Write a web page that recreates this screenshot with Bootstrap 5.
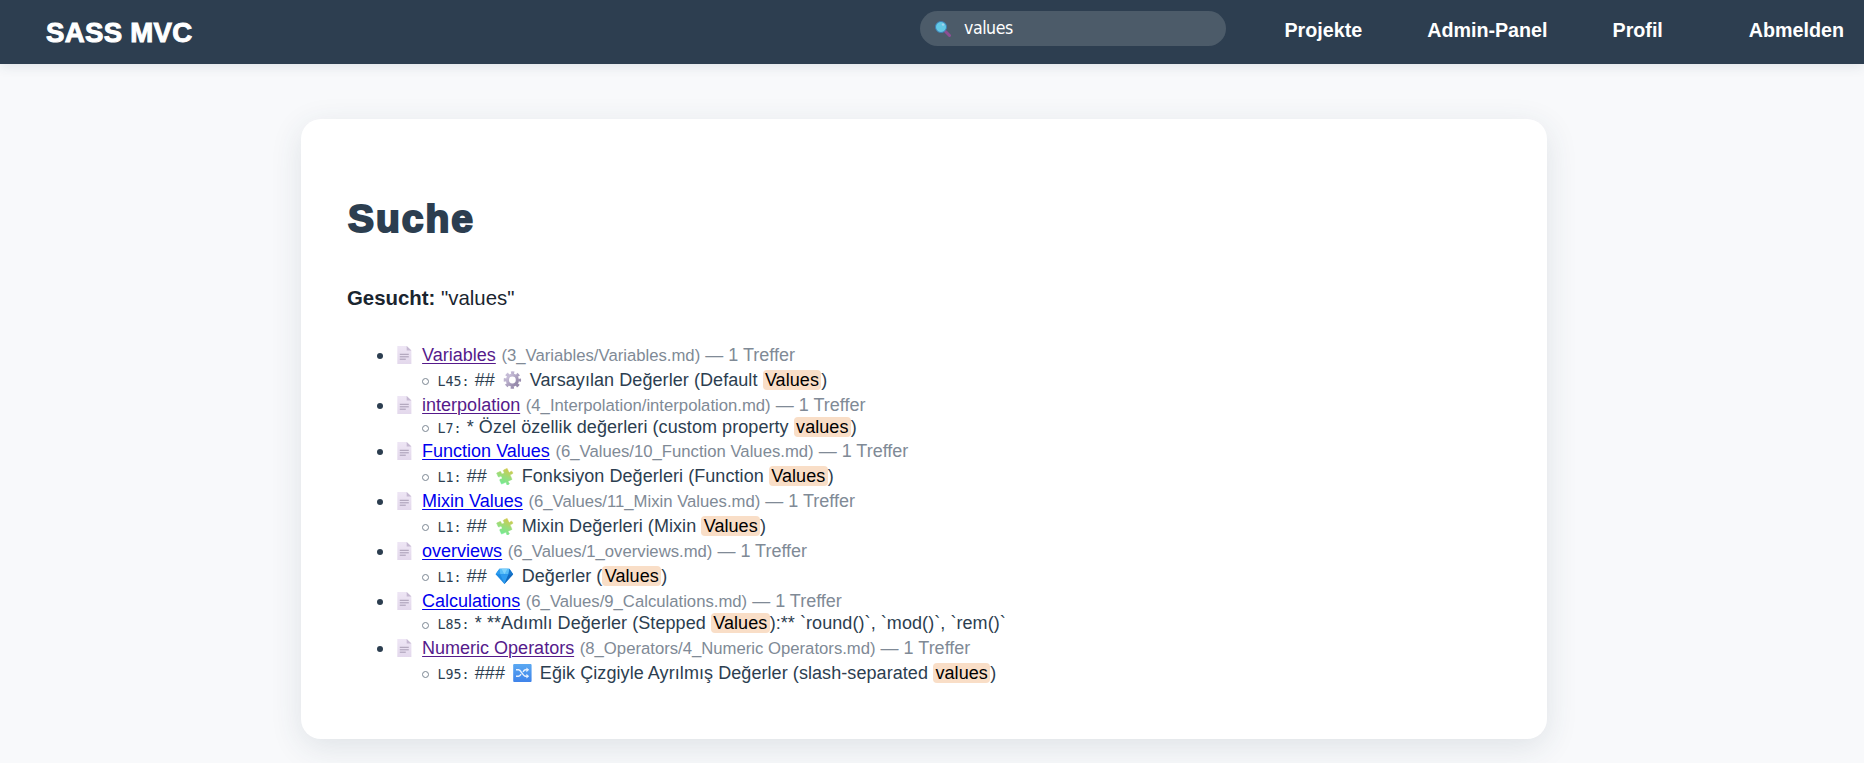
<!DOCTYPE html>
<html lang="de">
<head>
<meta charset="utf-8">
<meta name="viewport" content="width=device-width, initial-scale=1">
<title>SASS MVC – Suche</title>
<link href="https://cdn.jsdelivr.net/npm/bootstrap@5.3.0/dist/css/bootstrap.min.css" rel="stylesheet">
<style>
  body { background: #f8f9fb; color: #2c3e50; font-family: "Liberation Sans", Arial, sans-serif; font-size: 18px; min-height: 763px; }
  .topbar { height: 64px; background: #2d3e50; box-shadow: 0 2px 12px rgba(44, 62, 80, .12); padding: 0 20px 0 46px; }
  .topbar .navbar-brand { font-size: 27.6px; font-weight: 800; color: #fff; -webkit-text-stroke: 1px #fff; line-height: 65px; letter-spacing: .3px; }
  .searchbox { width: 306px; height: 35px; margin: 11px 58.5px 0 0; padding: 0 15px; border-radius: 18px; background: #4c5b69; }
  .searchbox input { background: none; border: 0; outline: 0; color: #fff; padding: 0; margin-left: 13px; width: 200px; height: 31px; margin-bottom: 2px; font: 17.6px "DejaVu Sans Condensed", "DejaVu Sans", sans-serif; font-stretch: condensed; letter-spacing: -.45px; }
  .topbar .nav-link { color: #fff; font-weight: 700; font-size: 19.7px; line-height: 29px; padding: 0; white-space: nowrap; }
  .topbar .nav-link + .nav-link { margin-left: 65px; }
  .topbar .nav-link.logout { margin-left: 86px; }
  .panel { width: 1246px; height: 620px; margin: 55px 0 0 301px; padding: 73px 46px 0; border: 0; border-radius: 20px; background: #fff; box-shadow: 0 8px 32px rgba(44, 62, 80, .12); }
  .panel h1 { font-size: 39px; line-height: 54px; font-weight: 900; letter-spacing: 2px; -webkit-text-stroke: 2.1px #2c3e50; color: #2c3e50; margin: 0 0 37px; padding-left: 1px; }
  .query { font-size: 20.4px; line-height: 30px; color: #1a252f; margin: 0 0 29.6px; }
  .hits, .hits ul { list-style: none; margin: 0; padding: 0; }
  .hits { padding-left: 45.4px; }
  .hits ul { padding-left: 45px; letter-spacing: .07px; }
  .line { position: relative; line-height: 25px; height: 25px; white-space: nowrap; }
  .line.plain { line-height: 19.5px; height: 21.5px; }
  .line::before { content: ""; position: absolute; left: -15.6px; top: 10px; width: 6px; height: 6px; border-radius: 50%; background: #2c3e50; }
  .hits ul .line::before { left: -15.5px; background: none; width: 7px; height: 7px; border: 1px solid #7b8692; }
  .hits ul .plain::before { top: 7.5px; }
  .line a { color: #00e; text-decoration: underline; text-underline-offset: 2px; text-decoration-thickness: 1px; }
  .line a.seen { color: #551a8b; }
  .meta { color: #808a96; margin-left: .6px; }
  .path { font-size: 16.7px; line-height: 1; }
  .line code { font: 13.3px/1 "DejaVu Sans Mono", monospace; color: inherit; }
  .hit { background: #f9dec7; color: #000; border-radius: 4px; padding: 0 2.3px; }
  .ico { width: 24.7px; height: 18px; vertical-align: -3px; display: inline-block; overflow: visible; }
</style>
</head>
<body>
<svg width="0" height="0" class="position-absolute" aria-hidden="true">
  <defs>
    <linearGradient id="gGear" x1="0" y1="0" x2="1" y2="1"><stop offset="0" stop-color="#cfc6df"/><stop offset="1" stop-color="#8d80a3"/></linearGradient>
    <linearGradient id="gPuz" x1="0" y1="1" x2="1" y2="0"><stop offset="0" stop-color="#66ee9c"/><stop offset=".5" stop-color="#9bdc79"/><stop offset="1" stop-color="#e2c43e"/></linearGradient>
    <linearGradient id="gBox" x1="0" y1="0" x2="0" y2="1"><stop offset="0" stop-color="#5ba9f2"/><stop offset="1" stop-color="#3f83ea"/></linearGradient>
    <linearGradient id="gDoc" x1="0" y1="0" x2="0" y2="1"><stop offset="0" stop-color="#eee6f5"/><stop offset="1" stop-color="#e3d8ec"/></linearGradient>
  </defs>
  <symbol id="doc" viewBox="0 0 24.7 18"><path d="M5.3 0h9.400l4.700 4.600V18H5.300z" fill="url(#gDoc)"/><path d="M14.700 0v4.600h4.700z" fill="#c6b9d2"/><path d="M7.800 8.300h9M7.800 10.800h9M7.800 13.200h6" stroke="#a79bb3" stroke-width="1"/></symbol>
  <symbol id="gear" viewBox="0 0 24.7 18"><g fill="none" stroke="url(#gGear)"><circle cx="12.400" cy="9" r="5" stroke-width="3.200"/><circle cx="12.400" cy="9" r="7.300" stroke-width="2.800" stroke-dasharray="3.200 2.533" stroke-dashoffset="1.600"/></g></symbol>
  <symbol id="puzzle" viewBox="0 0 24.7 18"><path transform="rotate(-24 12.4 9)" d="M6.500 3.200h3.700c.7.300.9.900.6 1.500-.8 2.200 3.600 2.200 2.800 0-.3-.6-.1-1.200.6-1.500H18v3.900c.2.800.8 1 1.500.5 2.500-1.200 2.500 3.700 0 2.600-.7-.4-1.300-.2-1.500.5v4.500h-3.800c-.8.200-1 .8-.5 1.500 1.200 2.500-3.700 2.500-2.500 0 .4-.7.200-1.300-.6-1.500H6.500v-4.300c.3-.7.900-.8 1.500-.5 2.200.8 2.200-3.500 0-2.700-.6.300-1.200.1-1.500-.5z" fill="url(#gPuz)" stroke="url(#gPuz)" stroke-width=".5" stroke-linejoin="round"/></symbol>
  <symbol id="gem" viewBox="0 0 24.7 18"><path d="M7.400 1.700h10L21.200 7.200 12.400 17 3.600 7.200z" fill="#1f8be2"/><path d="M7.400 1.700 8.300 7.200H3.600z" fill="#2d9df0"/><path d="M7.400 1.700h10L16.500 7.200H8.300z" fill="#58bdf8"/><path d="M9.500 1.700h6L12.400 7.200z" fill="#7fd3fc"/><path d="M17.400 1.700 21.200 7.200h-4.700z" fill="#1676cd"/><path d="M8.300 7.200h8.200l-4.100 9.800z" fill="#2f9df0"/><path d="M16.500 7.200h4.700l-8.800 9.800z" fill="#1269bd"/></symbol>
  <symbol id="shuffle" viewBox="0 0 24.7 18"><rect x="3.200" y="-.2" width="18.400" height="18.400" rx="1.500" fill="url(#gBox)"/><path d="M6 5.800h2.600c2.600 0 4 6.400 7 6.400H17M6 12.200h2.600c1 0 1.800-.9 2.500-2M13 7.800c.8-1.200 1.600-2 2.600-2H17" fill="none" stroke="#e6effd" stroke-width="1.400"/><path d="M16.400 3.400l2.800 2.400-2.800 2.400zM16.400 9.800l2.800 2.400-2.800 2.400z" fill="#e6effd"/></symbol>
</svg>

<nav class="topbar navbar d-flex flex-nowrap align-items-start">
  <a class="navbar-brand p-0 m-0 me-auto" href="#">SASS MVC</a>
  <form class="searchbox d-flex align-items-center">
    <svg width="16" height="16" viewBox="0 0 16 16"><path d="M10.500 10.500l4 4" stroke="#8d4f94" stroke-width="3" stroke-linecap="round"/><circle cx="6" cy="6" r="5.500" fill="#62c8e5" stroke="#3e7fb5" stroke-width="1"/><circle cx="8" cy="3.600" r="1.200" fill="#a5d3ef"/></svg>
    <input type="text" value="values" aria-label="Suche">
  </form>
  <div class="d-flex pt-3">
    <a class="nav-link" href="#">Projekte</a>
    <a class="nav-link" href="#">Admin-Panel</a>
    <a class="nav-link" href="#">Profil</a>
    <a class="nav-link logout" href="#">Abmelden</a>
  </div>
</nav>

<main class="panel card d-block">
  <h1>Suche</h1>
  <p class="query"><strong>Gesucht:</strong> "values"</p>
  <ul class="hits">
    <li><div class="line"><svg class="ico"><use href="#doc"/></svg> <a class="seen" href="#">Variables</a> <span class="meta"><span class="path">(3_Variables/Variables.md)</span> — 1 Treffer</span></div>
      <ul><li class="line"><code>L45:</code> ## <svg class="ico"><use href="#gear"/></svg> Varsayılan Değerler (Default <span class="hit">Values</span>)</li></ul></li>
    <li><div class="line"><svg class="ico"><use href="#doc"/></svg> <a class="seen" href="#">interpolation</a> <span class="meta"><span class="path">(4_Interpolation/interpolation.md)</span> — 1 Treffer</span></div>
      <ul><li class="line plain"><code>L7:</code> * Özel özellik değerleri (custom property <span class="hit">values</span>)</li></ul></li>
    <li><div class="line"><svg class="ico"><use href="#doc"/></svg> <a href="#">Function Values</a> <span class="meta"><span class="path">(6_Values/10_Function Values.md)</span> — 1 Treffer</span></div>
      <ul><li class="line"><code>L1:</code> ## <svg class="ico"><use href="#puzzle"/></svg> Fonksiyon Değerleri (Function <span class="hit">Values</span>)</li></ul></li>
    <li><div class="line"><svg class="ico"><use href="#doc"/></svg> <a href="#">Mixin Values</a> <span class="meta"><span class="path">(6_Values/11_Mixin Values.md)</span> — 1 Treffer</span></div>
      <ul><li class="line"><code>L1:</code> ## <svg class="ico"><use href="#puzzle"/></svg> Mixin Değerleri (Mixin <span class="hit">Values</span>)</li></ul></li>
    <li><div class="line"><svg class="ico"><use href="#doc"/></svg> <a href="#">overviews</a> <span class="meta"><span class="path">(6_Values/1_overviews.md)</span> — 1 Treffer</span></div>
      <ul><li class="line"><code>L1:</code> ## <svg class="ico"><use href="#gem"/></svg> Değerler (<span class="hit">Values</span>)</li></ul></li>
    <li><div class="line"><svg class="ico"><use href="#doc"/></svg> <a href="#">Calculations</a> <span class="meta"><span class="path">(6_Values/9_Calculations.md)</span> — 1 Treffer</span></div>
      <ul><li class="line plain"><code>L85:</code> * **Adımlı Değerler (Stepped <span class="hit">Values</span>):** `round()`, `mod()`, `rem()`</li></ul></li>
    <li><div class="line"><svg class="ico"><use href="#doc"/></svg> <a class="seen" href="#">Numeric Operators</a> <span class="meta"><span class="path">(8_Operators/4_Numeric Operators.md)</span> — 1 Treffer</span></div>
      <ul><li class="line"><code>L95:</code> ### <svg class="ico"><use href="#shuffle"/></svg> Eğik Çizgiyle Ayrılmış Değerler (slash-separated <span class="hit">values</span>)</li></ul></li>
  </ul>
</main>
<script src="https://cdn.jsdelivr.net/npm/bootstrap@5.3.0/dist/js/bootstrap.bundle.min.js"></script>
</body>
</html>
